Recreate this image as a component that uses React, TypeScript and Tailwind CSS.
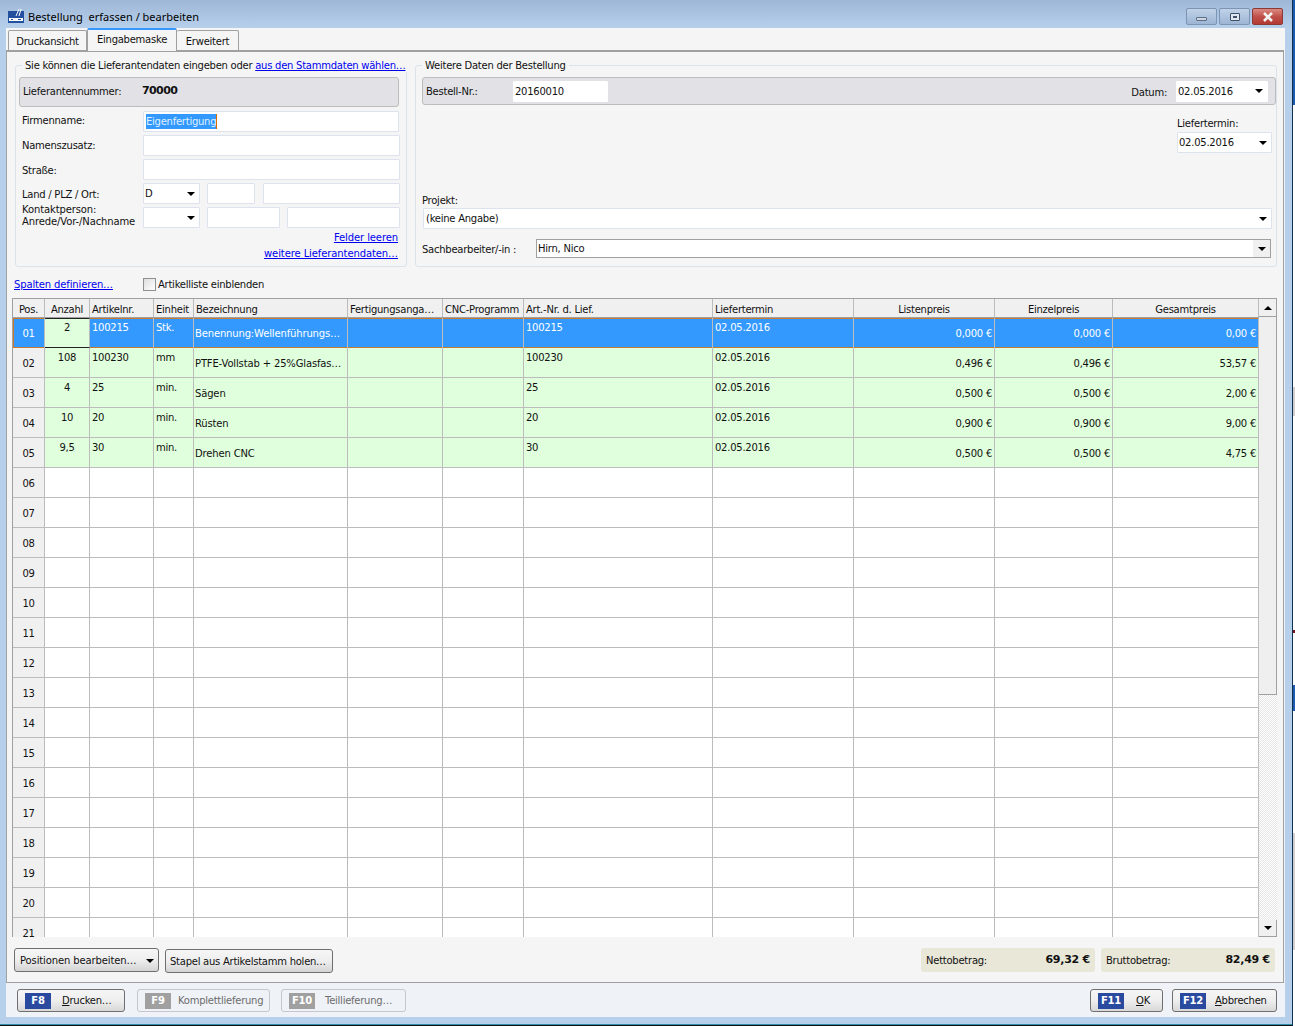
import type { ReactNode } from 'react';

const GRID = 'grid grid-cols-[32px_45px_64px_40px_154px_95px_81px_189px_141px_141px_118px_146px]';

interface Pos {
  anzahl: string;
  nr: string;
  einheit: string;
  name: string;
  liste: string;
  einzel: string;
  gesamt: string;
}

const positionen: Pos[] = [
  { anzahl: '2', nr: '100215', einheit: 'Stk.', name: 'Benennung:Wellenführungs…', liste: '0,000 €', einzel: '0,000 €', gesamt: '0,00 €' },
  { anzahl: '108', nr: '100230', einheit: 'mm', name: 'PTFE-Vollstab + 25%Glasfas…', liste: '0,496 €', einzel: '0,496 €', gesamt: '53,57 €' },
  { anzahl: '4', nr: '25', einheit: 'min.', name: 'Sägen', liste: '0,500 €', einzel: '0,500 €', gesamt: '2,00 €' },
  { anzahl: '10', nr: '20', einheit: 'min.', name: 'Rüsten', liste: '0,900 €', einzel: '0,900 €', gesamt: '9,00 €' },
  { anzahl: '9,5', nr: '30', einheit: 'min.', name: 'Drehen CNC', liste: '0,500 €', einzel: '0,500 €', gesamt: '4,75 €' },
];

const emptyRows = ['06', '07', '08', '09', '10', '11', '12', '13', '14', '15', '16', '17', '18', '19', '20', '21'];

function Arrow({ up }: { up?: boolean }) {
  return (
    <svg width="8" height="4" viewBox="0 0 8 4" className="shrink-0">
      <path d={up ? 'M4 0 L8 4 L0 4 Z' : 'M0 0 L8 0 L4 4 Z'} fill="#000" />
    </svg>
  );
}

function Input({ className, children }: { className: string; children?: ReactNode }) {
  return (
    <div className={`h-[21px] bg-white border border-[#dde3ee] rounded-[1px] flex items-center px-[2px] whitespace-nowrap ${className}`}>
      {children}
    </div>
  );
}

function Select({ className, value }: { className: string; value?: string }) {
  return (
    <Input className={`justify-between ${className}`}>
      <span>{value}</span>
      <span className="mr-[2px]"><Arrow /></span>
    </Input>
  );
}

function Label({ children, className = '' }: { children: ReactNode; className?: string }) {
  return <div className={`w-[124px] pl-[3px] shrink-0 ${className}`}>{children}</div>;
}

function HeaderCell({ children, align = 'left' }: { children: ReactNode; align?: 'left' | 'center' }) {
  return (
    <div className={`h-full border-r border-[#bcbcbc] px-[2px] pt-[2px] flex items-center whitespace-nowrap overflow-hidden ${align === 'center' ? 'justify-center' : ''}`}>
      {children}
    </div>
  );
}

function Top({ children, center, sel }: { children?: ReactNode; center?: boolean; sel?: boolean }) {
  return (
    <div className={`h-full border-r border-[#bcbcbc] px-[2px] pt-[3px] leading-[14px] whitespace-nowrap ${center ? 'text-center' : ''} ${sel ? 'text-white' : ''}`}>
      {children}
    </div>
  );
}

function Low({ children, right, sel }: { children?: ReactNode; right?: boolean; sel?: boolean }) {
  return (
    <div className={`h-full border-r border-[#bcbcbc] pr-[2px] pl-[1px] pt-[9px] leading-[14px] whitespace-nowrap overflow-hidden ${right ? 'text-right' : 'tracking-[-0.15px]'} ${sel ? 'text-white' : ''}`}>
      {children}
    </div>
  );
}

function FKey({ k, label, off, keyW = 'w-[26px]', className }: { k: string; label: ReactNode; off?: boolean; keyW?: string; className: string }) {
  return (
    <div className={`h-[23px] rounded-[3px] border flex items-center pl-[7px] ${off ? 'border-[#c4c8ce] text-[#6d6d6d]' : 'border-[#6f6f6f] bg-gradient-to-b from-[#f6f6f6] via-[#eeeeee] to-[#d8d8d8]'} ${className}`}>
      <span className={`h-[16px] ${keyW} flex items-center justify-center text-white font-bold ${off ? 'bg-[#a0a0a0]' : 'bg-[#2a4a9f]'}`}>{k}</span>
      {label}
    </div>
  );
}

export default function App() {
  return (
    <div className="w-[1295px] h-[1026px] overflow-hidden bg-[#111] flex text-[10px] tracking-[-0.25px] text-[#111] font-['DejaVu_Sans',sans-serif]">
      <div className="w-[1292px] h-[1025px] shrink-0 bg-[#b6d0ec] flex flex-col border-b border-[#2f8fa8]">
        {/* title bar */}
        <div className="h-[28px] shrink-0 bg-gradient-to-b from-[#9fb7d6] to-[#b6d0ec] flex items-start pl-[8px] pt-[8px]">
          <svg width="16" height="17" viewBox="0 0 16 17" className="-mt-[1px]">
            <rect x="0" y="4" width="16" height="12" fill="#22509f" />
            <path d="M8 9 L11 2 M11 9 L13 2" stroke="#fff" strokeWidth="1" fill="none" />
            <rect x="1" y="11" width="14" height="3" fill="#fff" />
            <rect x="3" y="12" width="2" height="1" fill="#22509f" />
            <rect x="10" y="12" width="3" height="1" fill="#22509f" />
          </svg>
          <span className="ml-[4px] mt-[1px] text-[11px] tracking-normal leading-[16px] font-['Noto_Sans',sans-serif] whitespace-pre text-black">Bestellung  erfassen / bearbeiten</span>
          <div className="ml-auto flex gap-[2px] h-[17px] mr-[9px]">
            <div className="w-[31px] rounded-[2px] border border-[#7d94b4] bg-gradient-to-b from-[#c0d2e8] to-[#9db5d4] flex items-end justify-center pb-[3px]">
              <span className="w-[11px] h-[4px] bg-[#cfd5dd] border border-[#5b6f8a] rounded-[1px]" />
            </div>
            <div className="w-[31px] rounded-[2px] border border-[#7d94b4] bg-gradient-to-b from-[#c0d2e8] to-[#9db5d4] flex items-center justify-center">
              <span className="w-[10px] h-[8px] border border-[#3f5069] bg-[#dfe6ef] rounded-[1px] flex items-center justify-center">
                <span className="w-[4px] h-[2px] bg-[#3f5069]" />
              </span>
            </div>
            <div className="w-[31px] rounded-[2px] border border-[#8d3a36] bg-gradient-to-b from-[#d98a82] via-[#c0504a] to-[#b23a32] flex items-center justify-center">
              <svg width="12" height="10" viewBox="0 0 12 10">
                <path d="M2 1 L10 9 M10 1 L2 9" stroke="#f2f2f2" strokeWidth="2.6" />
              </svg>
            </div>
          </div>
        </div>

        <div className="mx-[6px] w-[1279px] h-[989px] flex flex-col bg-[#eff2f7]">
          {/* tabs */}
          <div className="h-[22px] shrink-0 bg-[#f5f5f5] flex items-end pl-[2px] relative z-10">
            <div className="w-[79px] h-[20px] border border-[#a0a0a0] border-b-0 rounded-t-[2px] bg-[#f5f5f5] text-center leading-[21px]">Druckansicht</div>
            <div className="w-[90px] h-[23px] mb-[-1px] border-x border-[#a0a0a0] border-t-2 border-t-[#3399ff] rounded-t-[2px] bg-[#f5f5f5] text-center leading-[20px]">Eingabemaske</div>
            <div className="w-[62px] h-[20px] border border-[#a0a0a0] border-b-0 border-l-0 rounded-t-[2px] bg-[#f5f5f5] text-center leading-[21px]">Erweitert</div>
          </div>

          <div className="w-[1278px] h-[933px] shrink-0 bg-[#f5f5f5] border border-[#a0a0a0] border-t-2 flex flex-col">
            {/* fieldsets */}
            <div className="flex gap-[8px] ml-[8px] mt-[6px] shrink-0">
              <fieldset className="w-[392px] min-w-0 h-[209px] border border-[#dbe2ec] rounded-[3px] px-[3px]">
                <legend className="ml-[3px] px-[3px] h-[14px] pt-[1px] leading-[14px] whitespace-nowrap">
                  Sie können die Lieferantendaten eingeben oder <span className="text-[#0000ee] underline">aus den Stammdaten wählen…</span>
                </legend>
                <div className="mt-[5px] w-[380px] h-[30px] bg-[#e1e1e6] border border-[#bcbcbc] rounded-[3px] flex items-center pl-[3px] pb-[2px]">
                  <span className="w-[119px]">Lieferantennummer:</span>
                  <span className="font-bold text-[11px] tracking-[-0.6px]">70000</span>
                </div>
                <div className="mt-[4px] flex flex-col gap-[3px]">
                  <div className="flex items-center">
                    <Label className="pb-[2px]">Firmenname:</Label>
                    <Input className="w-[256px] border-[#7da2ce]">
                      <span className="bg-[#3399ff] text-[#dff0ff] border-r border-[#d86a00]">Eigenfertigung</span>
                    </Input>
                  </div>
                  <div className="flex items-center">
                    <Label>Namenszusatz:</Label>
                    <Input className="w-[257px]" />
                  </div>
                  <div className="flex items-center">
                    <Label className="pt-[2px]">Straße:</Label>
                    <Input className="w-[257px]" />
                  </div>
                  <div className="flex items-center">
                    <Label className="pt-[2px]">Land / PLZ / Ort:</Label>
                    <Select className="w-[57px] pl-[1px]" value="D" />
                    <Input className="w-[48px] ml-[7px]" />
                    <Input className="w-[137px] ml-[8px]" />
                  </div>
                  <div className="flex items-start h-[21px]">
                    <Label className="-mt-[3px]">
                      <div className="leading-[12px] whitespace-nowrap tracking-[-0.12px]">Kontaktperson:<br />Anrede/Vor-/Nachname</div>
                    </Label>
                    <Select className="w-[57px]" />
                    <Input className="w-[73px] ml-[7px]" />
                    <Input className="w-[113px] ml-[7px]" />
                  </div>
                </div>
                <div className="w-[379px] mt-[2px] flex flex-col items-end text-[#0000ee] underline leading-[16px] tracking-[-0.1px]">
                  <div>Felder leeren</div>
                  <div>weitere Lieferantendaten…</div>
                </div>
              </fieldset>

              <fieldset className="w-[862px] min-w-0 h-[209px] border border-[#dbe2ec] rounded-[3px] pl-[6px]">
                <legend className="px-[3px] h-[14px] pt-[1px] leading-[14px] whitespace-nowrap">Weitere Daten der Bestellung</legend>
                <div className="mt-[5px] w-[854px] h-[28px] bg-[#e1e1e6] border border-[#bcbcbc] rounded-[3px] flex items-center pl-[3px]">
                  <span className="w-[87px]">Bestell-Nr.:</span>
                  <Input className="w-[95px] border-white pl-[1px]">20160010</Input>
                  <span className="ml-auto mr-[9px] pt-[2px]">Datum:</span>
                  <Select className="w-[92px] mr-[7px] border-white pl-[1px]" value="02.05.2016" />
                </div>
                <div className="w-[850px] mt-[12px] flex flex-col items-end">
                  <div className="w-[95px] leading-[14px]">Liefertermin:</div>
                  <Select className="w-[95px] mt-[1px] pl-[1px]" value="02.05.2016" />
                </div>
                <div className="mt-[41px] leading-[14px]">Projekt:</div>
                <Select className="w-[849px] ml-[1px]" value="(keine Angabe)" />
                <div className="mt-[10px] flex items-center">
                  <span className="w-[114px] shrink-0 pt-[2px]">Sachbearbeiter/-in :</span>
                  <div className="w-[735px] h-[19px] bg-white border border-[#a0a0a0] flex items-center justify-between pl-[1px]">
                    Hirn, Nico
                    <span className="w-[17px] h-[17px] bg-[#f0f0f0] flex items-center justify-center"><Arrow /></span>
                  </div>
                </div>
              </fieldset>
            </div>

            {/* table options */}
            <div className="h-[31px] shrink-0 ml-[7px] pt-[4px] flex items-center">
              <span className="w-[129px] text-[#0000ee] underline tracking-[-0.14px]">Spalten definieren…</span>
              <span className="w-[13px] h-[13px] border border-[#8e8f8f] bg-gradient-to-br from-[#dedede] to-[#ffffff] mr-[2px]" />
              <span>Artikelliste einblenden</span>
            </div>

            {/* table */}
            <div className="ml-[5px] w-[1265px] h-[639px] shrink-0 border-t border-l border-[#a0a0a0] flex bg-white overflow-hidden">
              <div className="w-[1246px] shrink-0 flex flex-col">
                <div className={`${GRID} h-[19px] shrink-0 bg-[#f0f0f0] border-b border-[#a0a0a0]`}>
                  <HeaderCell align="center">Pos.</HeaderCell>
                  <HeaderCell align="center">Anzahl</HeaderCell>
                  <HeaderCell>Artikelnr.</HeaderCell>
                  <HeaderCell>Einheit</HeaderCell>
                  <HeaderCell>Bezeichnung</HeaderCell>
                  <HeaderCell>Fertigungsanga…</HeaderCell>
                  <HeaderCell>CNC-Programm</HeaderCell>
                  <HeaderCell>Art.-Nr. d. Lief.</HeaderCell>
                  <HeaderCell>Liefertermin</HeaderCell>
                  <HeaderCell align="center">Listenpreis</HeaderCell>
                  <HeaderCell align="center">Einzelpreis</HeaderCell>
                  <HeaderCell align="center">Gesamtpreis</HeaderCell>
                </div>
                {positionen.map((p, i) => {
                  const sel = i === 0;
                  return (
                    <div
                      key={p.nr}
                      className={`${GRID} h-[30px] shrink-0 ${sel ? 'bg-[#3399ff] ring-1 ring-inset ring-[#c87a2f]' : 'bg-[#e0ffdc] border-b border-[#bcbcbc]'}`}
                    >
                      <div className={`h-full border-r border-[#bcbcbc] pt-[9px] leading-[14px] text-center ${sel ? 'text-white' : 'bg-[#f0f0f0]'}`}>0{i + 1}</div>
                      {sel ? (
                        <div className="h-full bg-[#e0ffdc] border-y border-[#222] border-r border-r-[#bcbcbc] pt-[2px] leading-[14px] text-center">{p.anzahl}</div>
                      ) : (
                        <Top center>{p.anzahl}</Top>
                      )}
                      <Top sel={sel}>{p.nr}</Top>
                      <Top sel={sel}>{p.einheit}</Top>
                      <Low sel={sel}>{p.name}</Low>
                      <Low sel={sel} />
                      <Low sel={sel} />
                      <Top sel={sel}>{p.nr}</Top>
                      <Top sel={sel}>02.05.2016</Top>
                      <Low right sel={sel}>{p.liste}</Low>
                      <Low right sel={sel}>{p.einzel}</Low>
                      <Low right sel={sel}>{p.gesamt}</Low>
                    </div>
                  );
                })}
                {emptyRows.map((n) => (
                  <div key={n} className={`${GRID} h-[30px] shrink-0 border-b border-[#bcbcbc]`}>
                    <div className="h-full bg-[#f0f0f0] border-r border-[#bcbcbc] pt-[9px] leading-[14px] text-center">{n}</div>
                    <Top /><Top /><Top /><Top /><Top /><Top /><Top /><Top /><Top /><Top /><Top />
                  </div>
                ))}
              </div>
              {/* scrollbar */}
              <div className="w-[18px] h-full flex flex-col">
                <div className="h-[18px] shrink-0 border-b border-r border-[#a0a0a0] bg-[#f0f0f0] flex items-center justify-center"><Arrow up /></div>
                <div className="h-[378px] shrink-0 bg-[#efefef] border-b border-r border-[#a0a0a0]" />
                <div className="flex-1 bg-[repeating-conic-gradient(#e6e6e6_0_25%,#ffffff_0_50%)] bg-[length:2px_2px]" />
                <div className="h-[17px] shrink-0 border-b border-r border-[#a0a0a0] bg-[#f0f0f0] flex items-center justify-center"><Arrow /></div>
              </div>
            </div>

            {/* bottom bar */}
            <div className="flex-1 flex items-start pl-[7px] pt-[11px]">
              <div className="w-[145px] h-[24px] rounded-[3px] border border-[#6f6f6f] bg-gradient-to-b from-[#f6f6f6] via-[#eeeeee] to-[#d4d4d4] flex items-center justify-between pl-[5px] pr-[4px] pt-[1px] tracking-[-0.12px]">
                Positionen bearbeiten…
                <Arrow />
              </div>
              <div className="ml-[6px] mt-[1px] w-[168px] h-[24px] rounded-[3px] border border-[#6f6f6f] bg-gradient-to-b from-[#f6f6f6] via-[#eeeeee] to-[#d4d4d4] flex items-center pl-[4px] pt-[1px] whitespace-nowrap">
                Stapel aus Artikelstamm holen…
              </div>
              <div className="ml-[588px] w-[174px] h-[24px] rounded-[3px] bg-[#e9e7d8] flex items-center justify-between px-[5px] pt-[1px]">
                Nettobetrag:
                <span className="font-bold text-[11px]">69,32 €</span>
              </div>
              <div className="ml-[6px] w-[174px] h-[24px] rounded-[3px] bg-[#e9e7d8] flex items-center justify-between px-[5px] pt-[1px]">
                Bruttobetrag:
                <span className="font-bold text-[11px]">82,49 €</span>
              </div>
            </div>
          </div>

          {/* footer */}
          <div className="flex-1 flex items-start pt-[6px] pl-[11px] leading-[16px]">
            <FKey k="F8" className="w-[108px]" label={<span className="ml-[11px] pt-[1px]"><u>D</u>rucken…</span>} />
            <FKey off k="F9" className="w-[133px] ml-[12px]" label={<span className="ml-[7px] pt-[1px]">Komplettlieferung</span>} />
            <FKey off k="F10" className="w-[125px] ml-[11px]" label={<span className="ml-[10px] pt-[1px]">Teillieferung…</span>} />
            <FKey k="F11" className="w-[73px] ml-[684px]" label={<span className="ml-[12px] pt-[1px]"><u>O</u>K</span>} />
            <FKey k="F12" className="w-[105px] ml-[9px]" label={<span className="ml-[9px] pt-[1px]"><u>A</u>bbrechen</span>} />
          </div>
        </div>
      </div>

      {/* other window peeking out at the right edge */}
      <div className="w-[3px] shrink-0 h-[1026px] border-l border-[#12304f] flex flex-col bg-white">
        <div className="h-[105px] bg-[#1c5bb0]" />
        <div className="h-[282px]" />
        <div className="h-[29px] bg-[#d0d0d0]" />
        <div className="h-[214px]" />
        <div className="h-[3px] bg-[#7a1020]" />
        <div className="h-[52px]" />
        <div className="h-[26px] bg-[#1c5bb0]" />
        <div className="h-[122px]" />
        <div className="h-[117px] bg-[#d0d0d0]" />
      </div>
    </div>
  );
}
